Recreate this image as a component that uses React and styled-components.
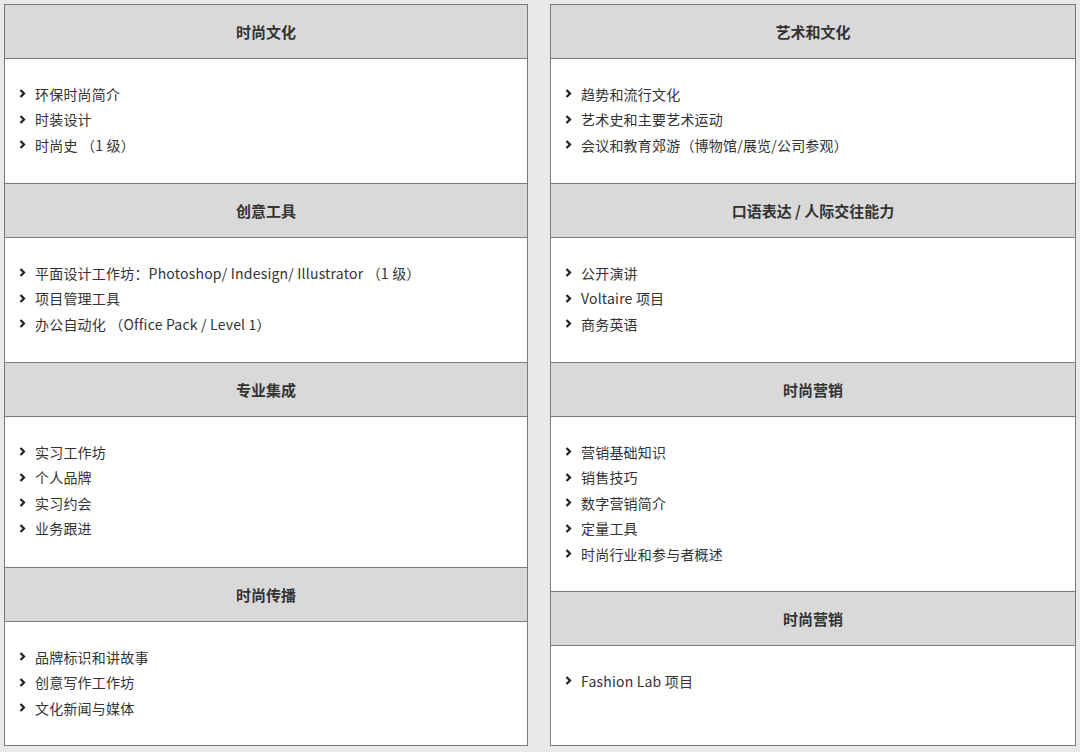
import React from "react";
import styled, { createGlobalStyle } from "styled-components";

const Global = createGlobalStyle`
  html, body { margin: 0; padding: 0; background: #e9e9e9; }
  body { font-family: "Noto Sans CJK SC", "Noto Sans", sans-serif; color: #333; }
`;

const Page = styled.div`
  display: grid;
  grid-template-columns: 524px 526px;
  column-gap: 22px;
  padding: 4px 5px 0 4px;
  width: 1080px;
  box-sizing: border-box;
`;

const Column = styled.div`
  display: flex;
  flex-direction: column;
  border: 1px solid #7a7a7a;
  border-top-width: 1px;
  background: #fff;
`;

const Header = styled.div`
  height: 54px;
  display: flex;
  align-items: center;
  justify-content: center;
  background: #d9d9d9;
  font-size: 15px;
  font-weight: 700;
  color: #333;
  border-bottom: 1px solid #7a7a7a;
  border-top: ${p => (p.$first ? "none" : "1px solid #7a7a7a")};
  box-sizing: border-box;
  height: ${p => (p.$first ? "54px" : "55px")};
`;

const Body = styled.ul`
  list-style: none;
  margin: 0;
  padding: 22px 14px 0 14px;
  height: ${p => p.$h}px;
  box-sizing: border-box;
  display: flex;
  flex-direction: column;
`;

const Item = styled.li`
  display: flex;
  align-items: center;
  gap: 9px;
  height: 25.5px;
  font-size: 14px;
  color: #333;
  letter-spacing: 0.2px;
  white-space: nowrap;
`;

const Chev = () => (
  <svg width="7" height="9" viewBox="0 0 7 9">
    <path d="M1.5 1l3.5 3.5L1.5 8" fill="none" stroke="#222" strokeWidth="2.2" />
  </svg>
);

const Section = ({ title, items, h, first }) => (
  <>
    <Header $first={first}>{title}</Header>
    <Body $h={h}>
      {items.map(t => (
        <Item key={t}><Chev />{t}</Item>
      ))}
    </Body>
  </>
);

export default function App() {
  return (
    <>
      <Global />
      <Page>
        <Column>
          <Section first title="时尚文化" h={124} items={["环保时尚简介", "时装设计", "时尚史 （1 级）"]} />
          <Section title="创意工具" h={124} items={["平面设计工作坊：Photoshop/ Indesign/ Illustrator （1 级）", "项目管理工具", "办公自动化 （Office Pack / Level 1）"]} />
          <Section title="专业集成" h={150} items={["实习工作坊", "个人品牌", "实习约会", "业务跟进"]} />
          <Section title="时尚传播" h={123} items={["品牌标识和讲故事", "创意写作工作坊", "文化新闻与媒体"]} />
        </Column>
        <Column>
          <Section first title="艺术和文化" h={124} items={["趋势和流行文化", "艺术史和主要艺术运动", "会议和教育郊游（博物馆/展览/公司参观）"]} />
          <Section title="口语表达 / 人际交往能力" h={124} items={["公开演讲", "Voltaire 项目", "商务英语"]} />
          <Section title="时尚营销" h={174} items={["营销基础知识", "销售技巧", "数字营销简介", "定量工具", "时尚行业和参与者概述"]} />
          <Section title="时尚营销" h={98} items={["Fashion Lab 项目"]} />
        </Column>
      </Page>
    </>
  );
}
